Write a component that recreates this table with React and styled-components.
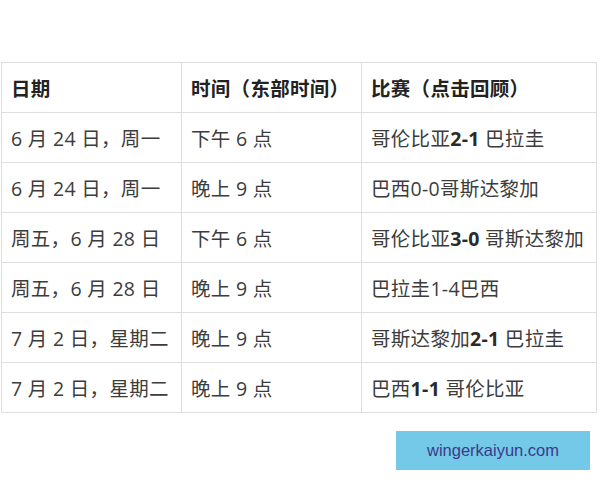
import React from "react";
import styled, { createGlobalStyle } from "styled-components";

const GlobalStyle = createGlobalStyle`
  body {
    margin: 0;
    background: #ffffff;
    font-family: "Open Sans", "Noto Sans CJK SC", sans-serif;
  }
`;

const Page = styled.div`
  width: 600px;
  height: 480px;
  padding-top: 62px;
  box-sizing: border-box;
`;

const Table = styled.table`
  border-collapse: collapse;
  margin-left: 1px;
  width: 596px;
  table-layout: fixed;
`;

const Cell = styled.td`
  border: 1px solid #dedede;
  height: 49px;
  padding: 0 0 0 9px;
  font-size: 19.5px;
  letter-spacing: 0.3px;
  color: ${(p) => (p.$head ? "#222" : "#3c3c3c")};
  font-weight: ${(p) => (p.$head ? 700 : 400)};
  white-space: nowrap;
  overflow: hidden;
  vertical-align: middle;
`;

const Score = styled.b`
  font-weight: 700;
  color: #2a2a2a;
`;

const Badge = styled.div`
  margin: 18px 0 0 396px;
  width: 194px;
  height: 39px;
  background: #74c9e8;
  color: #3b3a8a;
  font-family: "Liberation Sans", Arial, sans-serif;
  font-size: 16.5px;
  display: flex;
  align-items: center;
  justify-content: center;
`;

const rows = [
  ["6 月 24 日，周一", "下午 6 点", <>哥伦比亚<Score>2-1</Score> 巴拉圭</>],
  ["6 月 24 日，周一", "晚上 9 点", "巴西0-0哥斯达黎加"],
  ["周五，6 月 28 日", "下午 6 点", <>哥伦比亚<Score>3-0</Score> 哥斯达黎加</>],
  ["周五，6 月 28 日", "晚上 9 点", "巴拉圭1-4巴西"],
  ["7 月 2 日，星期二", "晚上 9 点", <>哥斯达黎加<Score>2-1</Score> 巴拉圭</>],
  ["7 月 2 日，星期二", "晚上 9 点", <>巴西<Score>1-1</Score> 哥伦比亚</>],
];

export default function App() {
  return (
    <Page>
      <GlobalStyle />
      <Table>
        <colgroup>
          <col style={{ width: 180 }} />
          <col style={{ width: 180 }} />
          <col />
        </colgroup>
        <tbody>
          <tr>
            <Cell $head>日期</Cell>
            <Cell $head>时间（东部时间）</Cell>
            <Cell $head>比赛（点击回顾）</Cell>
          </tr>
          {rows.map((r, i) => (
            <tr key={i}>
              <Cell>{r[0]}</Cell>
              <Cell>{r[1]}</Cell>
              <Cell>{r[2]}</Cell>
            </tr>
          ))}
        </tbody>
      </Table>
      <Badge>wingerkaiyun.com</Badge>
    </Page>
  );
}
